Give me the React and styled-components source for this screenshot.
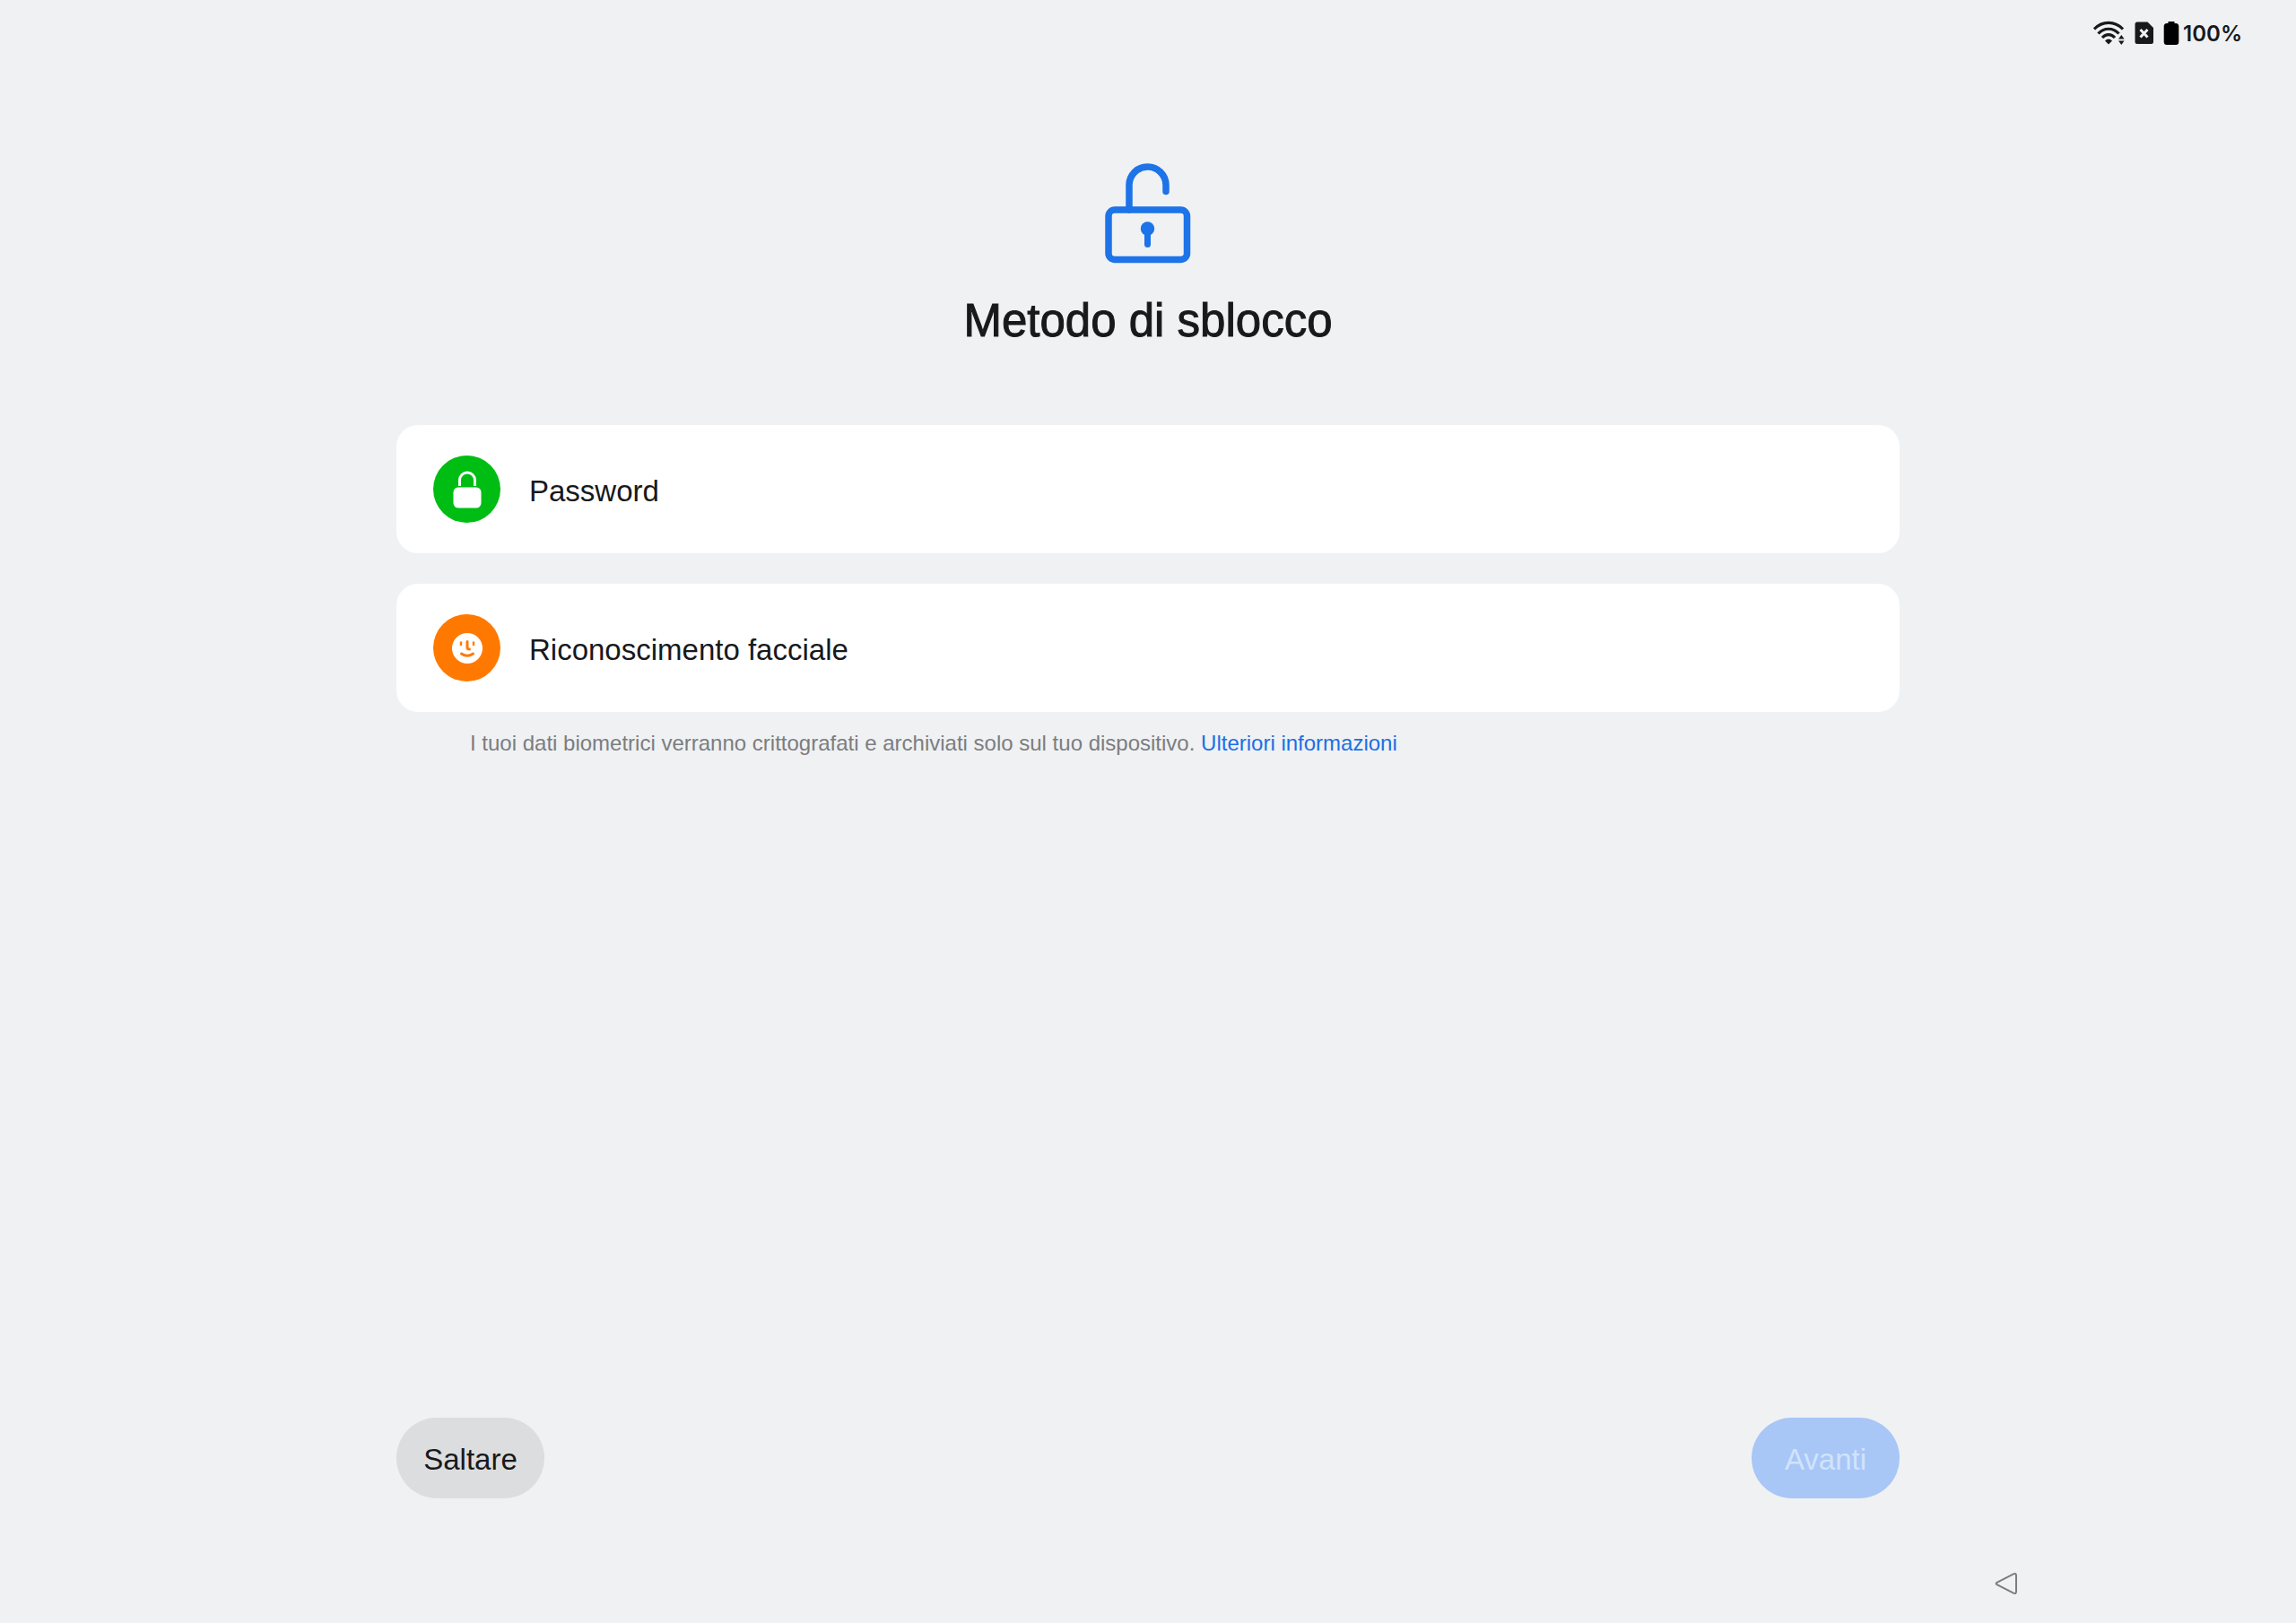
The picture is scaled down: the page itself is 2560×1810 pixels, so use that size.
import React from 'react'
import styled, { createGlobalStyle } from 'styled-components'

const methods = [
    { id: 'password', label: 'Password', color: '#00bd13', Icon: LockGlyph },
    { id: 'face', label: 'Riconoscimento facciale', color: '#ff7900', Icon: FaceGlyph },
]

function App() {
    return (
        <Page>
            <GlobalStyle />
            <StatusBar>
                <WifiIcon />
                <SimIcon />
                <Battery>
                    <BatteryIcon />
                    <span>100%</span>
                </Battery>
            </StatusBar>
            <Content>
                <Header>
                    <UnlockIcon />
                    <Title>Metodo di sblocco</Title>
                </Header>
                <MethodList>
                    {methods.map(({ id, label, color, Icon }) => (
                        <li key={id}>
                            <Method type="button">
                                <Badge $color={color}>
                                    <Icon />
                                </Badge>
                                <Label>{label}</Label>
                            </Method>
                        </li>
                    ))}
                </MethodList>
                <Note>
                    I tuoi dati biometrici verranno crittografati e archiviati solo sul tuo dispositivo.{' '}
                    <a href="#info">Ulteriori informazioni</a>
                </Note>
                <Actions>
                    <PillButton type="button">
                        <Label>Saltare</Label>
                    </PillButton>
                    <PillButton type="button" $primary disabled>
                        <Label>Avanti</Label>
                    </PillButton>
                </Actions>
            </Content>
            <NavBar>
                <BackButton type="button" aria-label="Indietro">
                    <BackIcon />
                </BackButton>
            </NavBar>
        </Page>
    )
}

export default App

function WifiIcon() {
    return (
        <svg width="36" height="28" viewBox="0 0 36 28" fill="none" stroke="#17191b" strokeWidth="3.2">
            <path d="M1 9.5C10 0 24 0 33 9.5" />
            <path d="M5.5 14.5C12 7.5 22 7.5 28.5 14.5" />
            <path d="M10 19C14 14.5 20 14.5 24 19" />
            <path d="M13 22.5Q17 18.5 21 22.5L17 26.500Z" fill="#17191b" stroke="none" />
            <path d="M28 20.5L31.3 16L34.6 20.5ZM28 22.500L31.3 27L34.6 22.500Z" fill="#17191b" stroke="none" />
        </svg>
    )
}

function SimIcon() {
    return (
        <svg width="22" height="26" viewBox="0 0 22 26">
            <path d="M3 .5H14.5L21 7V22.5Q21 25 18.5 25H3Q.5 25 .5 22.5V3Q.5 .5 3 .5Z" fill="#17191b" />
            <path d="M6.5 9L14.5 17.5M14.5 9L6.5 17.5" stroke="#eff1f3" strokeWidth="3" />
        </svg>
    )
}

function BatteryIcon() {
    return (
        <svg width="18" height="28" viewBox="0 0 18 28">
            <path d="M5.5 1H12.5V3H14Q17.3 3 17.3 6.5V23.5Q17.3 27 14 27H4Q.7 27 .7 23.5V6.5Q.7 3 4 3H5.5Z" />
        </svg>
    )
}

function UnlockIcon() {
    return (
        <svg width="96" height="112" viewBox="0 0 96 112" fill="none" stroke="#1d73e8" strokeWidth="7.5" strokeLinecap="round">
            <path d="M27 52V24.5a20.5 20.5 0 0 1 41 0V31.5" />
            <rect x="4" y="52" width="87.5" height="55.5" rx="7" />
            <circle cx="47.5" cy="73" r="7.7" fill="#1d73e8" stroke="none" />
            <path d="M47.5 74V90.5" strokeWidth="7" />
        </svg>
    )
}

function LockGlyph() {
    return (
        <svg width="32" height="42" viewBox="0 0 32 42">
            <path d="M7.5 17V10.5a8.5 8.5 0 0 1 17 0V17" fill="none" stroke="#fff" strokeWidth="3" />
            <rect x=".5" y="18.5" width="31" height="23" rx="5.5" fill="#fff" />
        </svg>
    )
}

function FaceGlyph() {
    return (
        <svg width="34" height="34" viewBox="0 0 34 34" fill="none" stroke="#ff7900">
            <circle cx="17" cy="17" r="17" fill="#fff" stroke="none" />
            <path d="M10 9.5V14M24 9.5V14" strokeWidth="2.4" />
            <path d="M17 9.5V16Q17 18 19.5 18" strokeWidth="3" strokeLinecap="round" />
            <path d="M10.5 23Q17 27.5 23.5 23" strokeWidth="3" strokeLinecap="round" />
        </svg>
    )
}

function BackIcon() {
    return (
        <svg width="28" height="28" viewBox="0 0 28 28" fill="none" stroke="#7c7d7f" strokeWidth="2">
            <path d="M3.5 12.8L22 3.3Q25 2 25 5V23Q25 26 22 24.7L3.5 15.2Q1.8 14 3.5 12.8Z" />
        </svg>
    )
}

const GlobalStyle = createGlobalStyle`
    * {
        box-sizing: border-box;
    }
    body {
        margin: 0;
        background: #eff1f3;
        color: #17191b;
        font-family: "Liberation Sans", Arial, sans-serif;
    }
    button {
        border: none;
        font-family: inherit;
        cursor: pointer;
    }
    svg {
        display: block;
        flex: none;
    }
`
const Page = styled.div`
    display: flex;
    flex-direction: column;
    min-height: 100vh;
`
const StatusBar = styled.div`
    display: flex;
    justify-content: flex-end;
    align-items: center;
    gap: 10px;
    height: 74px;
    padding: 0 60px;
    font-family: Inter, sans-serif;
    font-size: 24px;
    font-weight: 600;
`
const Battery = styled.div`
    display: flex;
    align-items: center;
    gap: 4px;
`
const Content = styled.main`
    display: flex;
    flex-direction: column;
    flex: 1;
    width: 88%;
    max-width: 1676px;
    margin: 0 auto;
`
const Header = styled.header`
    display: flex;
    flex-direction: column;
    align-items: center;
    padding: 108px 0 84px;
`
const Title = styled.h1`
    margin: 32px 0 0;
    font-size: 51px;
    font-weight: 400;
    line-height: 64px;
    -webkit-text-stroke: 1px currentColor;
`
const MethodList = styled.ul`
    display: flex;
    flex-direction: column;
    gap: 34px;
    margin: 0;
    padding: 0;
    list-style: none;
`
const Method = styled.button`
    display: flex;
    align-items: center;
    gap: 32px;
    width: 100%;
    padding: 34px 41px;
    border-radius: 24px;
    background: #fff;
    color: #17191b;
    font-size: 33px;
`
const Badge = styled.span`
    display: flex;
    align-items: center;
    justify-content: center;
    width: 75px;
    height: 75px;
    border-radius: 50%;
    background: ${({ $color }) => $color};
`
const Label = styled.span`
    display: block;
    padding-top: 4px;
    line-height: 40px;
`
const Note = styled.p`
    margin: 19px 82px 0;
    color: #7c7d7f;
    font-size: 24px;
    line-height: 32px;

    a {
        color: #1d6fe3;
        text-decoration: none;
    }
`
const Actions = styled.div`
    display: flex;
    justify-content: space-between;
    margin-top: auto;
`
const PillButton = styled.button`
    min-width: 165px;
    height: 90px;
    padding: 0 30px;
    border-radius: 45px;
    background: ${({ $primary }) => ($primary ? '#a8c6f6' : '#dcddde')};
    color: ${({ $primary }) => ($primary ? '#d1e3fc' : '#17191b')};
    font-size: 33px;
`
const NavBar = styled.nav`
    display: flex;
    justify-content: flex-end;
    align-items: flex-end;
    height: 139px;
    padding: 0 309px 30px;
`
const BackButton = styled.button`
    padding: 0;
    background: none;
`
